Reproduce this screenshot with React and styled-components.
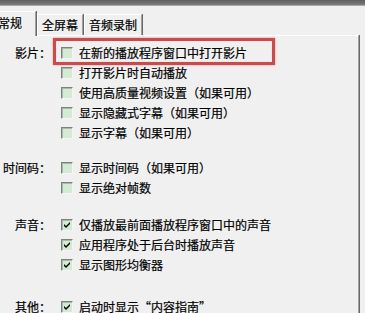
import React from "react";
import styled, { createGlobalStyle } from "styled-components";

const Global = createGlobalStyle`
  html, body { margin: 0; padding: 0; background: #f0f0f0; overflow: hidden; }
  body {
    font-family: "Noto Sans CJK SC", "Noto Sans", sans-serif;
    font-size: 12px;
    color: #000;
    -webkit-text-stroke: 0.2px #000;
  }
`;

const Frame = styled.div`
  width: 365px;
  height: 313px;
  overflow: hidden;
  background: #f0f0f0;
`;

const TopBar = styled.div`
  height: 5px;
  background: linear-gradient(#5f5f5f, #7c7c7c);
  border-bottom: 1px solid #a8a8a8;
`;

const TabStrip = styled.div`
  display: flex;
  align-items: flex-end;
  height: 29px;
  margin-left: -17px;
  position: relative;
  z-index: 1;
`;

const Tab = styled.div`
  box-sizing: border-box;
  height: ${(p) => (p.$active ? 25 : 21)}px;
  margin-bottom: ${(p) => (p.$active ? -1 : 0)}px;
  padding: ${(p) => (p.$active ? "0 13px 0 14px" : "0 4px")};
  padding-bottom: ${(p) => (p.$active ? 2 : 0)}px;
  display: flex;
  align-items: center;
  border-top: 1px solid #ffffff;
  border-left: 1px solid #ffffff;
  border-right: 1px solid #a0a0a0;
  box-shadow: 1px 0 0 #696969;
  margin-right: 1px;
  background: #f0f0f0;
  line-height: 1;
  white-space: nowrap;
`;

const Panel = styled.div`
  box-sizing: border-box;
  width: 359px;
  height: 280px;
  border-top: 1px solid #ffffff;
  border-right: 1px solid #a0a0a0;
  box-shadow: 1px 0 0 #696969;
  padding-top: 7px;
`;

const Group = styled.div`
  display: grid;
  grid-template-columns: 51px 1fr;
  column-gap: 10px;
  margin-top: ${(p) => p.$gap || 0}px;
`;

const Label = styled.div`
  text-align: right;
  line-height: 20px;
  height: 20px;
  white-space: nowrap;
`;

const Options = styled.div`
  display: flex;
  flex-direction: column;
`;

const Row = styled.div`
  position: relative;
  height: 20px;
  display: flex;
  align-items: center;
  gap: 6px;
  white-space: nowrap;

  ${(p) =>
    p.$marked &&
    `
    &::after {
      content: "";
      position: absolute;
      left: -8px;
      top: -5px;
      width: 222px;
      height: 27px;
      box-sizing: border-box;
      border: 3px solid #cb4b4d;
      box-shadow: 0 0 2px rgba(203, 75, 77, 0.55), inset 0 0 1px rgba(203, 75, 77, 0.5);
      pointer-events: none;
    }
  `}
`;

const Box = styled.span`
  box-sizing: border-box;
  width: 12px;
  height: 12px;
  flex: none;
  border-top: 1px solid #7f7f7f;
  border-left: 1px solid #7f7f7f;
  border-bottom: 1px solid #f4f4f4;
  border-right: 1px solid #f4f4f4;
  box-shadow: inset 1px 1px 0 #a9b8a9;
  background: #d3ebd3;
  display: flex;
  align-items: center;
  justify-content: center;
`;

const Text = styled.span`
  line-height: 20px;
`;

const Check = ({ checked }) => (
  <Box>
    {checked && (
      <svg width="8" height="8" viewBox="0 0 8 8">
        <path d="M1 3 L3 5 L7 1 L7 3 L3 7 L1 5 Z" fill="#000" />
      </svg>
    )}
  </Box>
);

const Option = ({ checked, marked, children }) => (
  <Row $marked={marked}>
    <Check checked={checked} />
    <Text>{children}</Text>
  </Row>
);

export default function App() {
  return (
    <Frame>
      <Global />
      <TopBar />
      <TabStrip>
        <Tab $active>常规</Tab>
        <Tab>全屏幕</Tab>
        <Tab>音频录制</Tab>
      </TabStrip>
      <Panel>
        <Group>
          <Label>影片：</Label>
          <Options>
            <Option marked>在新的播放程序窗口中打开影片</Option>
            <Option>打开影片时自动播放</Option>
            <Option>使用高质量视频设置（如果可用）</Option>
            <Option>显示隐藏式字幕（如果可用）</Option>
            <Option>显示字幕（如果可用）</Option>
          </Options>
        </Group>
        <Group $gap={15}>
          <Label>时间码：</Label>
          <Options>
            <Option>显示时间码（如果可用）</Option>
            <Option>显示绝对帧数</Option>
          </Options>
        </Group>
        <Group $gap={17}>
          <Label>声音：</Label>
          <Options>
            <Option checked>仅播放最前面播放程序窗口中的声音</Option>
            <Option checked>应用程序处于后台时播放声音</Option>
            <Option checked>显示图形均衡器</Option>
          </Options>
        </Group>
        <Group $gap={22}>
          <Label>其他：</Label>
          <Options>
            <Option checked>启动时显示“内容指南”</Option>
          </Options>
        </Group>
      </Panel>
    </Frame>
  );
}
